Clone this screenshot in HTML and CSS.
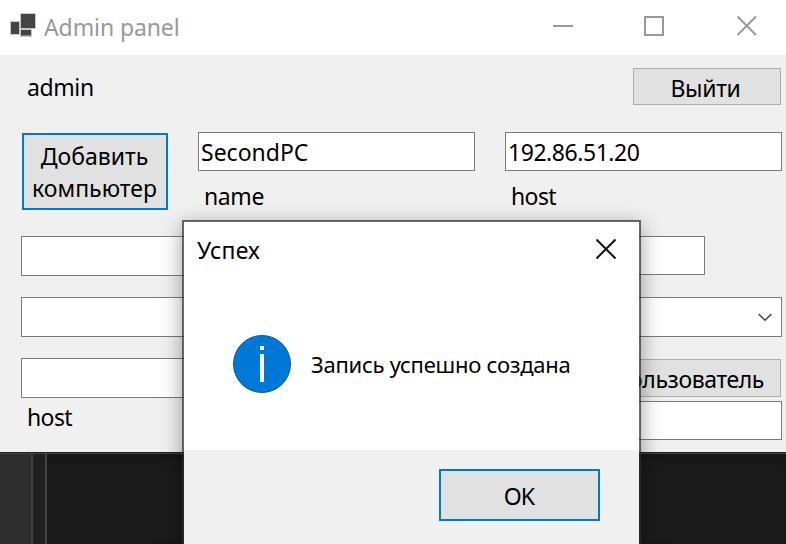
FILE: index.html
```html
<!DOCTYPE html>
<html lang="ru">
<head>
<meta charset="utf-8">
<title>Admin panel</title>
<link rel="stylesheet" href="styles.css">
</head>
<body>
<div class="screen">
  <div class="window">
    <header class="titlebar">
      <svg class="app-icon" width="27" height="26" viewBox="0 0 27 26">
        <path fill="#c8c8c8" d="M0 8h10v14H0zM10 0h16v16H10zM10 16h12v8H10z"/>
        <path fill="#444" d="M1 9h8v12H1zM11 1h14v14H11zM11 17h10v5.500H11z"/>
      </svg>
      <span class="title"><span class="t t-title">Admin panel</span></span>
      <svg class="controls" width="206" height="24" viewBox="0 0 206 24" fill="none" stroke="#999" stroke-width="2">
        <path d="M0 12H20"/>
        <rect x="92" y="3" width="18" height="18"/>
        <path d="M184.500 2.500L203 21M203 2.500L184.500 21"/>
      </svg>
    </header>
    <main class="form">
      <div class="row account">
        <span class="t t-admin">admin</span>
        <button class="btn logout"><span class="t t-logout">Выйти</span></button>
      </div>
      <div class="row computer">
        <button class="btn focus add"><span class="t t-add1">Добавить</span><span class="t t-add2">компьютер</span></button>
        <div class="field">
          <div class="box short"><span class="t t-value1">SecondPC</span></div>
          <span class="t label t-name">name</span>
        </div>
        <div class="field">
          <div class="box short"><span class="t t-value2">192.86.51.20</span></div>
          <span class="t label t-host">host</span>
        </div>
      </div>
      <div class="row wide first"><div class="box left"></div><div class="box short narrow"></div></div>
      <div class="row wide"><div class="box left"></div>
        <div class="box combo"><svg width="14" height="9" viewBox="0 0 14 9" fill="none" stroke="#444" stroke-width="1.400"><path d="M.6 1L7 7.300L13.400 1"/></svg></div>
      </div>
      <div class="row wide">
        <div class="field"><div class="box left"></div><span class="t label t-host">host</span></div>
        <div class="user"><button class="btn user-btn"><span class="t t-user">пользователь</span></button><div class="box short"></div></div>
      </div>
    </main>
  </div>
  <div class="backdrop"><div class="rail"></div><div class="gutter"></div><div class="canvas"></div></div>
  <section class="dialog" role="dialog">
    <header class="dialog-head">
      <span class="t t-success">Успех</span>
      <svg width="22" height="22" viewBox="0 0 22 22" fill="none" stroke="#111" stroke-width="2"><path d="M1.500 1.500L20.500 20.500M20.500 1.500L1.500 20.500"/></svg>
    </header>
    <div class="message">
      <svg width="58" height="58" viewBox="0 0 58 58"><circle cx="29" cy="29" r="28.500" fill="#0078d7" stroke="#0b5795"/><path fill="#fff" d="M27 11h4v4h-4zM27 19h4v28h-4z"/></svg>
      <span class="t t-message">Запись успешно создана</span>
    </div>
    <footer class="actions"><button class="btn focus ok"><span class="t t-ok">OK</span></button></footer>
  </section>
</div>
</body>
</html>
```
FILE: styles.css
```css
* { box-sizing: border-box; }
body { margin: 0; }
.screen { position: relative; width: 786px; height: 544px; overflow: hidden; background: #1b1b1b; color: #000; font: 23px/32px "Noto Sans", sans-serif; }
.window { height: 452px; background: #f0f0f0; }
.titlebar { height: 55px; background: #fff; display: flex; align-items: center; padding: 0 27px 3px 10px; color: #999; }
.app-icon { margin-right: 7px; }
.title { flex: 1; padding-top: 2px; }
.t { display: block; white-space: nowrap; }
.form { padding: 13px 4px 0 21px; }
.row { display: flex; justify-content: space-between; }
.account { height: 64px; padding: 0 1px 0 6px; }
.account > .t { margin-top: 3px; }
.btn { margin: 0; padding: 0; border: 1px solid #adadad; border-radius: 0; background: #e1e1e1; color: #000; font: inherit; display: flex; align-items: center; justify-content: center; overflow: hidden; }
.btn.focus { border: 2px solid #0078d7; }
.logout { width: 148px; height: 37px; }
.logout .t { padding-top: 2px; margin-right: 3px; }
.computer { height: 104px; }
.add { width: 146px; height: 77px; margin: 1px 0 0 1px; flex-direction: column; }
.add .t { margin-right: 1px; }
.computer .field { width: 277px; }
.box { height: 40px; background: #fff; border: 1px solid #7a7a7a; padding: 3px 2px; }
.box.short { height: 39px; }
.label { margin: 9px 0 0 6px; }
.wide { height: 61px; }
.left { width: 350px; }
.narrow { width: 277px; margin-right: 77px; }
.combo { width: 277px; display: flex; justify-content: flex-end; align-items: center; padding-right: 9px; }
.wide .label { margin: 3px 0 0 6px; }
.user { width: 277px; padding-top: 1px; }
.user-btn { width: 276px; height: 38px; margin-bottom: 4px; justify-content: flex-end; padding: 2px 16px 0 0; }
.t-title { letter-spacing: -.1px; }
.t-admin, .t-user, .t-name { letter-spacing: -.4px; }
.t-host { letter-spacing: -.6px; }
.t-value2 { letter-spacing: -.45px; }
.t-logout { letter-spacing: -.3px; }
.t-success { letter-spacing: .2px; }
.t-message { font-size: 22px; letter-spacing: -.25px; }
.backdrop { height: 92px; display: flex; border-top: 1px solid #202020; box-shadow: inset 0 1px #414141, inset 0 7px 8px #171717; }
.rail { width: 33px; margin-top: 1px; background: #2e2e2e; border-right: 2px solid #414141; }
.gutter { width: 14px; margin-top: 1px; background: #202020; border-right: 2px solid #414141; }
.dialog { position: absolute; left: 182px; top: 220px; width: 459px; height: 340px; border: 2px solid rgba(45, 45, 45, .7); background: #fff; background-clip: padding-box; box-shadow: 0 5px 20px rgba(0, 0, 0, .38); }
.dialog-head { height: 56px; display: flex; justify-content: space-between; align-items: center; padding: 0 22px 2px 13px; }
.dialog-head .t { margin-top: 2px; }
.message { height: 172px; display: flex; align-items: center; padding: 0 0 0 49px; gap: 20px; }
.message .t { margin-top: 0; }
.actions { height: 110px; background: #f0f0f0; padding: 19px 39px; display: flex; justify-content: flex-end; }
.ok { width: 161px; height: 52px; }
.ok .t { padding-top: 1px; margin-right: 1px; letter-spacing: -.8px; }
```
